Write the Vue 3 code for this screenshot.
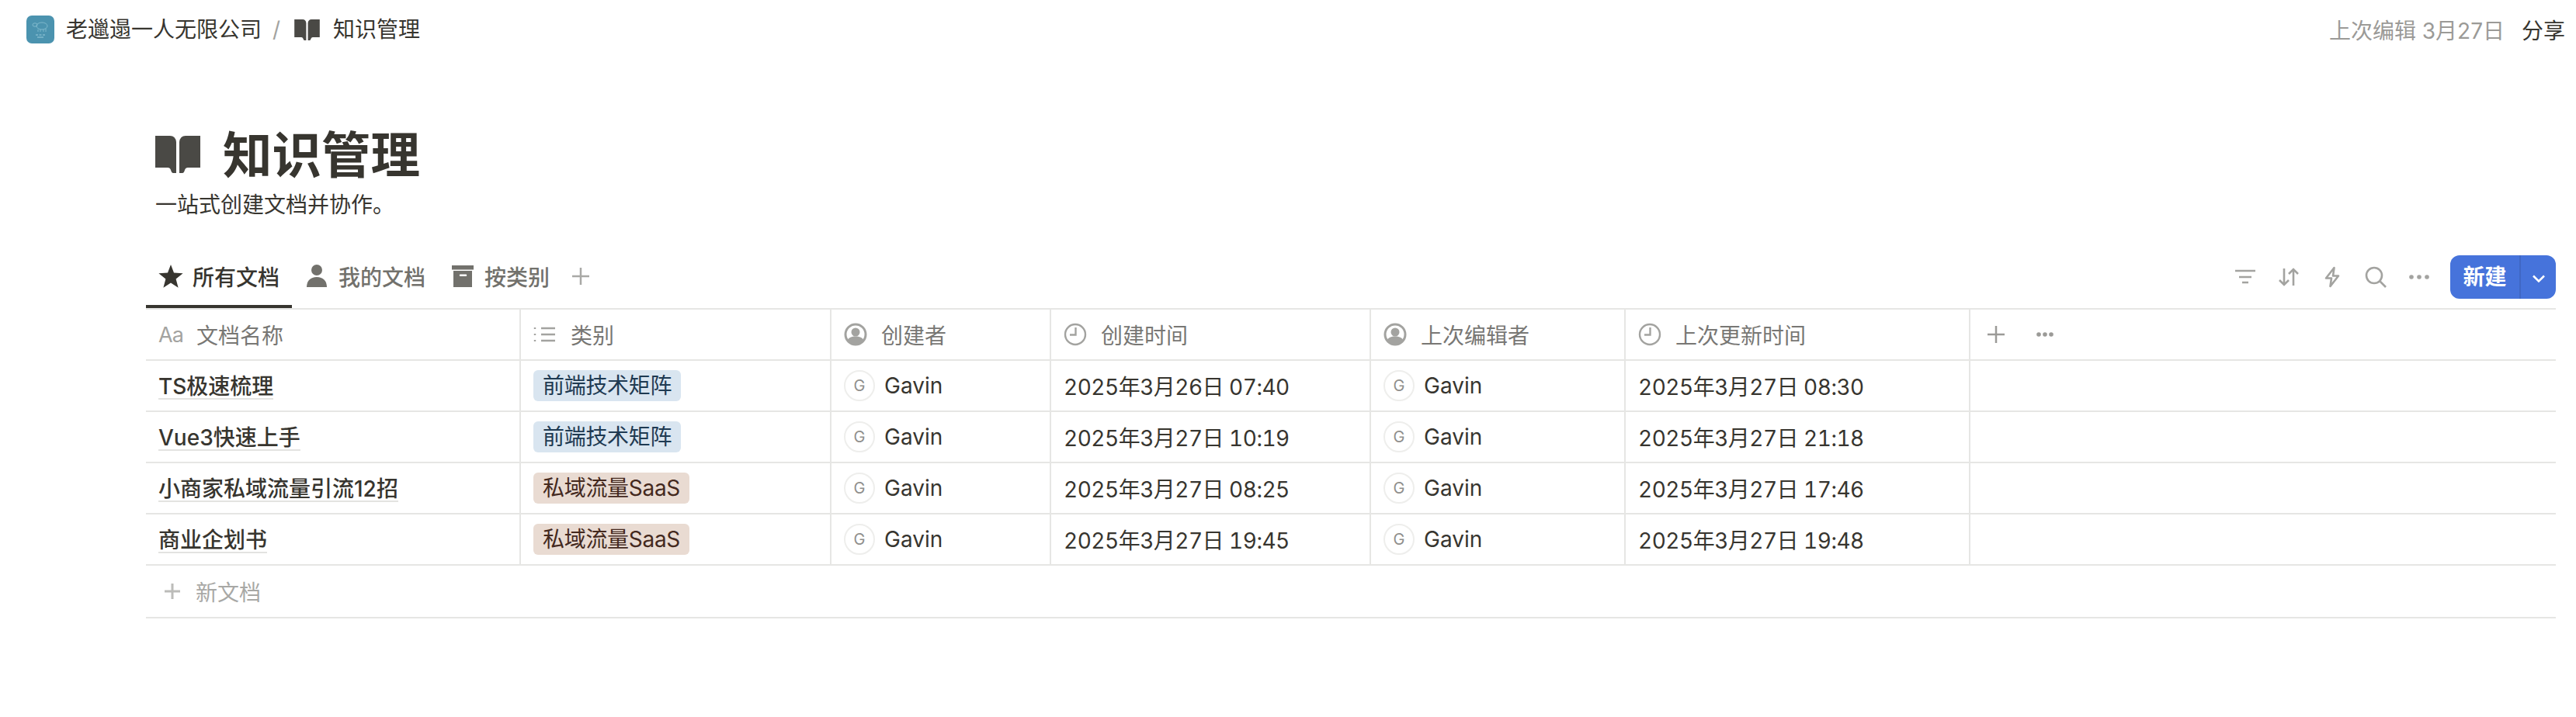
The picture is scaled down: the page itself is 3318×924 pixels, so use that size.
<template>
  <div class="page">
    <header class="topbar">
      <div class="crumbs">
        <svg class="logo" viewBox="0 0 36 36">
          <rect width="36" height="36" rx="7" fill="#4b93af" />
          <g fill="none" stroke="#8cc1d3" stroke-width="0.8">
            <ellipse cx="20" cy="13.5" rx="7" ry="4.5" />
            <ellipse cx="11" cy="12" rx="3" ry="2.2" />
            <path d="M15 18v3M18 18v3M22 18v3M25 17v4" />
          </g>
          <path d="M12 25h3M16.5 25h3M21 25h3M14 28h8" stroke="#9ccbdb" stroke-width="1" />
        </svg>
        <span class="crumb crumb-org">老邋遢一人无限公司</span>
        <span class="slash">/</span>
        <svg class="crumb-book" viewBox="0 0 58 48">
          <path :d="bookPath" />
        </svg>
        <span class="crumb">知识管理</span>
      </div>
      <div class="top-right">
        <span class="edited">上次编辑 3月27日</span>
        <span class="share">分享</span>
      </div>
    </header>

    <main class="content">
      <div class="title-block">
        <h1 class="title">
          <svg class="title-icon" viewBox="0 0 58 48">
            <path :d="bookPath" />
          </svg>
          知识管理
        </h1>
        <p class="subtitle">一站式创建文档并协作。</p>
      </div>

      <div class="view-bar">
        <div class="tabs">
          <div class="tab active">
            <svg class="tab-star" viewBox="0 0 32 30">
              <path d="M16 0l4 10.6 11.6.6-9 7.3 3 11.2L16 23.500l-9.600 6.200 3-11.200-9-7.300 11.600-.6z" />
            </svg>
            所有文档
          </div>
          <div class="tab">
            <svg class="tab-icon" viewBox="0 0 28 30">
              <circle cx="14" cy="7" r="7" />
              <path d="M1 29c0-8 5-13 13-13s13 5 13 13z" />
            </svg>
            我的文档
          </div>
          <div class="tab">
            <svg class="tab-icon" viewBox="0 0 28 30">
              <rect x="0" y="1" width="28" height="5.500" />
              <path fill-rule="evenodd" d="M2 8h24v21H2zM11 12.500a1 1 0 0 0 0 2.500h7a1 1 0 0 0 0-2.500z" />
            </svg>
            按类别
          </div>
          <svg class="tab-plus" viewBox="0 0 24 24">
            <path d="M12 1v22M1 12h22" />
          </svg>
        </div>

        <div class="tools">
          <svg class="tool" viewBox="0 0 28 28">
            <path d="M1 6h26M6 14h16M10 21h8" />
          </svg>
          <svg class="tool" viewBox="0 0 28 28">
            <path d="M8 3v21M2 18l6 6 6-6M20 25V4M14 10l6-6 6 6" />
          </svg>
          <svg class="tool" viewBox="0 0 28 28">
            <path d="M16.500 2L6 15.500h7L11.500 26 22 12.500h-7z" stroke-linejoin="round" />
          </svg>
          <svg class="tool" viewBox="0 0 28 28">
            <circle cx="12" cy="12" r="10" />
            <path d="M19.500 19.500L27 27" />
          </svg>
          <svg class="tool tool-dots" viewBox="0 0 28 28">
            <circle cx="4" cy="14" r="2.800" />
            <circle cx="14" cy="14" r="2.800" />
            <circle cx="24" cy="14" r="2.800" />
          </svg>
          <div class="new-btn">
            <span class="new-label">新建</span>
            <span class="new-arrow">
              <svg viewBox="0 0 18 12">
                <path d="M2 2.500l7 7 7-7" />
              </svg>
            </span>
          </div>
        </div>
      </div>

      <div class="table">
        <div class="row head">
          <div class="cell">
            <span class="aa">Aa</span>
            文档名称
          </div>
          <div class="cell">
            <svg class="head-icon list-icon" viewBox="0 0 30 30">
              <path d="M10 7h18M10 15h18M10 23h18" />
              <path class="dash" d="M2 6v2M2 14v2M2 22v2" />
            </svg>
            类别
          </div>
          <div class="cell">
            <svg class="head-icon" viewBox="0 0 30 30">
              <use href="#person-ring" />
            </svg>
            创建者
          </div>
          <div class="cell">
            <svg class="head-icon clock-icon" viewBox="0 0 30 30">
              <circle cx="15" cy="15" r="13" />
              <path d="M15.500 6v9.500H8" />
            </svg>
            创建时间
          </div>
          <div class="cell">
            <svg class="head-icon" viewBox="0 0 30 30">
              <use href="#person-ring" />
            </svg>
            上次编辑者
          </div>
          <div class="cell">
            <svg class="head-icon clock-icon" viewBox="0 0 30 30">
              <circle cx="15" cy="15" r="13" />
              <path d="M15.500 6v9.500H8" />
            </svg>
            上次更新时间
          </div>
          <div class="cell cell-last head-actions">
            <svg class="add-col" viewBox="0 0 24 24">
              <path d="M12 1v22M1 12h22" />
            </svg>
            <svg class="more-col" viewBox="0 0 24 8">
              <circle cx="4" cy="4" r="2.800" />
              <circle cx="12" cy="4" r="2.800" />
              <circle cx="20" cy="4" r="2.800" />
            </svg>
          </div>
        </div>

        <div v-for="doc in docs" :key="doc.name" class="row">
          <div class="cell">
            <span class="doc-name">{{ doc.name }}</span>
          </div>
          <div class="cell">
            <span class="tag" :class="doc.tagClass">{{ doc.tag }}</span>
          </div>
          <div class="cell">
            <span class="avatar">G</span>
            <span class="person">Gavin</span>
          </div>
          <div class="cell date">{{ doc.created }}</div>
          <div class="cell">
            <span class="avatar">G</span>
            <span class="person">Gavin</span>
          </div>
          <div class="cell date">{{ doc.updated }}</div>
          <div class="cell cell-last"></div>
        </div>

        <div class="new-row">
          <svg class="new-plus" viewBox="0 0 24 24">
            <path d="M12 2v20M2 12h20" />
          </svg>
          新文档
        </div>
      </div>
    </main>

    <svg class="defs" width="0" height="0">
      <defs>
        <g id="person-ring">
          <circle cx="15" cy="15" r="13" fill="none" stroke="#a3a3a0" stroke-width="3" />
          <circle cx="15" cy="12" r="5.500" fill="#a3a3a0" />
          <path d="M4 23c2-4 6-5.500 11-5.500s9 1.500 11 5.500c-2.500 4-6.500 6-11 6s-8.500-2-11-6z" fill="#a3a3a0" />
        </g>
      </defs>
    </svg>
  </div>
</template>

<script setup>
const bookPath =
  "M0 0H19Q26 0 27 8V48H23Q21 48 20 44Q19 41 16 41H0ZM58 0H39Q32 0 31 8V48H35Q37 48 38 44Q39 41 42 41H58Z";

const docs = [
  {
    name: "TS极速梳理",
    tag: "前端技术矩阵",
    tagClass: "tag-blue",
    created: "2025年3月26日 07:40",
    updated: "2025年3月27日 08:30",
  },
  {
    name: "Vue3快速上手",
    tag: "前端技术矩阵",
    tagClass: "tag-blue",
    created: "2025年3月27日 10:19",
    updated: "2025年3月27日 21:18",
  },
  {
    name: "小商家私域流量引流12招",
    tag: "私域流量SaaS",
    tagClass: "tag-brown",
    created: "2025年3月27日 08:25",
    updated: "2025年3月27日 17:46",
  },
  {
    name: "商业企划书",
    tag: "私域流量SaaS",
    tagClass: "tag-brown",
    created: "2025年3月27日 19:45",
    updated: "2025年3月27日 19:48",
  },
];
</script>

<style scoped>
.page {
  width: 3318px;
  height: 924px;
  overflow: hidden;
  background: #fff;
  color: #37352f;
  font-family: Inter, "Noto Sans CJK SC", sans-serif;
  font-size: 28px;
}

.topbar {
  height: 76px;
  padding: 0 14px 0 34px;
  display: flex;
  align-items: center;
  justify-content: space-between;
}

.crumbs {
  display: flex;
  align-items: center;
}

.logo {
  width: 36px;
  height: 36px;
  margin-right: 15px;
}

.crumb {
  line-height: 36px;
}

.slash {
  margin: 0 18px 0 14px;
  color: #a3a3a0;
}

.crumb-book {
  width: 33px;
  height: 27px;
  margin-right: 17px;
  fill: #4a4945;
}

.top-right {
  display: flex;
  align-items: center;
}

.edited {
  color: #9b9a97;
  margin-right: 22px;
}

.content {
  padding: 0 26px 0 188px;
}

.title-block {
  padding-left: 12px;
}

.title {
  display: flex;
  align-items: center;
  margin: 84px 0 0;
  height: 80px;
  font-size: 63.5px;
  font-weight: 700;
  line-height: 80px;
}

.title-icon {
  width: 58px;
  height: 48px;
  margin: -2px 29px 0 0;
  fill: #4a4945;
}

.subtitle {
  margin: 4px 0 0;
  line-height: 40px;
}

.view-bar {
  display: flex;
  justify-content: space-between;
  align-items: flex-end;
  margin-top: 35px;
}

.tabs {
  display: flex;
  align-items: center;
  gap: 2px;
}

.tab {
  display: flex;
  align-items: center;
  gap: 14px;
  height: 78px;
  padding: 0 16px;
  border-bottom: 4px solid transparent;
  box-sizing: border-box;
  color: #72716c;
  font-weight: 500;
}

.tab.active {
  gap: 12px;
  color: #37352f;
  border-bottom-color: #37352f;
}

.tab-star {
  width: 32px;
  height: 30px;
  fill: #37352f;
}

.tab-icon {
  width: 28px;
  height: 30px;
  fill: #72716c;
}

.tab-plus {
  width: 24px;
  height: 24px;
  margin: -4px 0 0 10px;
  fill: none;
  stroke: #a9a9a6;
  stroke-width: 2.500;
}

.tools {
  display: flex;
  align-items: center;
  gap: 28px;
  margin-bottom: 12px;
}

.tool {
  width: 28px;
  height: 28px;
  fill: none;
  stroke: #a3a3a0;
  stroke-width: 2.600;
}

.tool-dots {
  fill: #a3a3a0;
  stroke: none;
}

.new-btn {
  display: flex;
  height: 56px;
  margin-left: -2px;
  border-radius: 12px;
  overflow: hidden;
  background: #4673db;
  color: #fff;
  font-weight: 700;
}

.new-label {
  width: 89px;
  line-height: 56px;
  text-align: center;
  border-right: 2px solid #3f67c4;
}

.new-arrow {
  width: 45px;
  display: flex;
  align-items: center;
  justify-content: center;
}

.new-arrow svg {
  width: 18px;
  height: 12px;
  margin-top: 4px;
  fill: none;
  stroke: #fff;
  stroke-width: 2.500;
}

.table {
  border-top: 2px solid #e6e6e4;
}

.row {
  display: grid;
  grid-template-columns: 483px 400px 283px 412px 328px 444px 1fr;
  height: 66px;
  box-sizing: border-box;
  border-bottom: 2px solid #e6e6e4;
}

.cell {
  display: flex;
  align-items: center;
  min-width: 0;
  padding: 0 16px;
  box-sizing: border-box;
  border-right: 2px solid #e6e6e4;
  white-space: nowrap;
}

.cell-last {
  border-right: none;
}

.head .cell {
  color: #787774;
}

.date {
  font-variant-numeric: tabular-nums;
  letter-spacing: -0.5px;
}

.aa {
  width: 33px;
  margin-right: 16px;
  color: #a3a3a0;
  font-size: 27px;
  letter-spacing: -1px;
}

.head-icon {
  flex: none;
  width: 30px;
  height: 30px;
  margin-right: 18px;
}

.list-icon path {
  fill: none;
  stroke: #a3a3a0;
  stroke-width: 2.400;
}

.clock-icon {
  fill: none;
  stroke: #a3a3a0;
  stroke-width: 2.400;
}

.head-actions {
  padding-left: 21px;
}

.add-col {
  width: 24px;
  height: 24px;
  fill: none;
  stroke: #9b9a97;
  stroke-width: 2.500;
}

.more-col {
  width: 24px;
  height: 8px;
  margin-left: 39px;
  fill: #9b9a97;
}

.doc-name {
  margin-top: 4px;
  font-weight: 500;
  line-height: 30px;
  border-bottom: 2px solid #e3e3e1;
}

.tag {
  height: 40px;
  padding: 0 12px;
  border-radius: 6px;
  line-height: 40px;
  letter-spacing: -0.3px;
}

.tag-blue {
  background: #d9e5f0;
  color: #1f3a52;
}

.tag-brown {
  background: #e9dbd2;
  color: #44291e;
}

.avatar {
  flex: none;
  width: 40px;
  height: 40px;
  box-sizing: border-box;
  margin-right: 12px;
  border: 2px solid #eeeeec;
  border-radius: 50%;
  color: #8f8f8c;
  font-size: 20px;
  line-height: 36px;
  text-align: center;
}

.new-row {
  display: flex;
  align-items: center;
  height: 68px;
  padding-left: 22px;
  box-sizing: border-box;
  border-bottom: 2px solid #e6e6e4;
  color: #a8a8a5;
}

.new-plus {
  width: 24px;
  height: 24px;
  margin-right: 18px;
  fill: none;
  stroke: #bcbcb9;
  stroke-width: 3;
}

.defs {
  position: absolute;
}
</style>

<style>
html,
body {
  margin: 0;
  background: #fff;
}
</style>
